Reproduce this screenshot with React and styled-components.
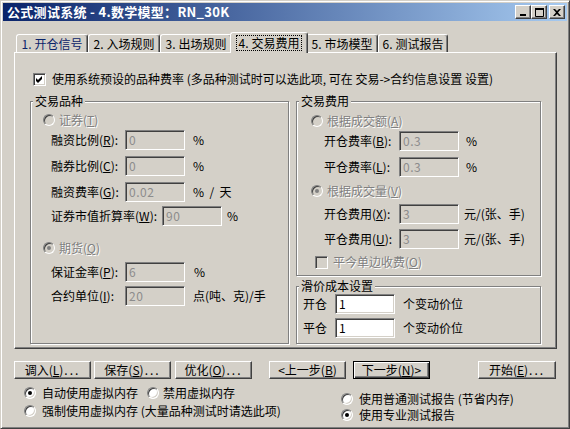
import React from 'react'
import styled, { createGlobalStyle, css } from 'styled-components'

const face = '#D4D0C8'
const shadow = '#808080'
const dark = '#404040'

const Global = createGlobalStyle`
	html, body { margin: 0; padding: 0; background: ${ face }; }
	body {
		font-family: "Noto Sans CJK SC", "Liberation Sans", sans-serif;
		font-size: 12px;
		line-height: 14px;
		color: #000;
	}
	* { box-sizing: border-box; }
`

const raised = css`
	border: 1px solid;
	border-color: #fff ${ dark } ${ dark } #fff;
	box-shadow: inset -1px -1px 0 ${ shadow };
`
const sunken = css`
	border: 1px solid;
	border-color: ${ shadow } #fff #fff ${ shadow };
	box-shadow: inset 1px 1px 0 ${ dark }, inset -1px -1px 0 ${ face };
`
const grayText = css`
	color: ${ shadow };
	text-shadow: 1px 1px 0 #fff;
`

const Window = styled.div`
	width: 570px;
	height: 429px;
	background: ${ face };
	border: 1px solid;
	border-color: ${ face } ${ dark } ${ dark } ${ face };
	box-shadow: inset 1px 1px 0 #fff, inset -1px -1px 0 ${ shadow };
	padding: 2px;
	display: flex;
	flex-direction: column;
	overflow: hidden;
`
const TitleBar = styled.div`
	height: 18px;
	display: flex;
	align-items: center;
	padding: 0 2px;
	background: linear-gradient(90deg, #0A246A, #A6CAF0);
	color: #fff;
	font-weight: bold;
	font-size: 13px;
`
const Caption = styled.div`
	flex: 1;
	white-space: nowrap;
	padding-left: 2px;
	letter-spacing: 0.3px;
`
const CapButton = styled.div`
	${ raised }
	width: 16px;
	height: 14px;
	margin-left: ${ p => p.$ml || 0 }px;
	background: ${ face };
	display: flex;
	align-items: center;
	justify-content: center;
`

const TabStrip = styled.div`
	display: flex;
	align-items: flex-end;
	height: 20px;
	margin: 11px 10px 0 11px;
	padding-left: 2px;
`
const Tab = styled.div`
	position: relative;
	flex: none;
	width: ${ p => p.$w }px;
	height: 18px;
	display: flex;
	align-items: center;
	justify-content: center;
	background: ${ face };
	border: 1px solid;
	border-bottom: none;
	border-color: #fff ${ dark } transparent #fff;
	border-radius: 3px 3px 0 0;
	box-shadow: inset -1px 0 0 ${ shadow };
	color: ${ p => p.$hot ? '#0A246A' : '#000' };
	white-space: nowrap;
	${ p => p.$active && css`
		width: ${ p.$w + 4 }px;
		height: 21px;
		margin: 0 -2px -1px;
		z-index: 1;
	` }
`
const Num = styled.span`
	margin-right: 3px;
`
const Focus = styled.span`
	outline: 1px dotted #000;
	outline-offset: 0;
	padding: 0 1px;
`
const Panel = styled.div`
	${ raised }
	margin: 0 10px 0 11px;
	height: 297px;
	padding: 19px 15px 0 15px;
`
const Row = styled.div`
	display: flex;
	align-items: center;
	height: ${ p => p.$h || 20 }px;
	margin: ${ p => p.$mt || 0 }px 0 0 ${ p => p.$ml || 0 }px;
	white-space: nowrap;
`
const Columns = styled.div`
	display: flex;
	gap: 7px;
	margin-top: 8px;
`
const Stack = styled.div`
	display: flex;
	flex-direction: column;
	width: ${ p => p.$w }px;
`
const Group = styled.fieldset`
	margin: ${ p => p.$mt || 0 }px 0 0;
	padding: 0;
	min-width: 0;
	width: ${ p => p.$w ? `${ p.$w }px` : 'auto' };
	height: ${ p => p.$h }px;
	border: 1px solid ${ shadow };
	box-shadow: inset 1px 1px 0 #fff, 1px 1px 0 #fff;
`
const Legend = styled.legend`
	margin-left: 2px;
	padding: 0 2px;
	background: ${ face };
	line-height: 14px;
`
const Label = styled.span`
	flex: none;
	width: ${ p => p.$w }px;
`
const Field = styled.div`
	${ sunken }
	flex: none;
	width: ${ p => p.$w || 60 }px;
	height: 20px;
	padding: 0 3px;
	display: flex;
	align-items: center;
	letter-spacing: 0.5px;
	background: ${ p => p.$disabled ? face : '#fff' };
	color: ${ p => p.$disabled ? '#8c8c8c' : '#000' };
`
const Unit = styled.span`
	margin-left: ${ p => p.$ml }px;
`
const Text = styled.span`
	margin-left: ${ p => p.$ml || 5 }px;
	${ p => p.$disabled && grayText }
`
const RadioDot = styled.span`
	${ sunken }
	flex: none;
	width: 12px;
	height: 12px;
	border-radius: 50%;
	margin-left: ${ p => p.$ml || 0 }px;
	background: ${ p => p.$disabled ? face : '#fff' };
	display: flex;
	align-items: center;
	justify-content: center;
	&::after {
		content: '';
		display: ${ p => p.$checked ? 'block' : 'none' };
		width: 4px;
		height: 4px;
		border-radius: 50%;
		background: ${ p => p.$disabled ? shadow : '#000' };
	}
`
const Box = styled.span`
	${ sunken }
	flex: none;
	width: 13px;
	height: 13px;
	background: ${ p => p.$disabled ? face : '#fff' };
	display: flex;
	align-items: center;
	justify-content: center;
`
const ButtonRow = styled.div`
	display: flex;
	margin: 12px 0 0 11px;
`
const Button = styled.div`
	${ raised }
	flex: none;
	width: ${ p => p.$w || 77 }px;
	height: 18px;
	margin-left: ${ p => p.$ml || 0 }px;
	display: flex;
	align-items: center;
	justify-content: center;
	white-space: nowrap;
	${ p => p.$default && css`
		border: 1px solid #000;
		box-shadow: inset 1px 1px 0 #fff, inset -1px -1px 0 ${ dark }, inset -2px -2px 0 ${ shadow };
	` }
`
const Dots = styled.span`
	letter-spacing: 2px;
	margin-left: 1px;
`
const Options = styled.div`
	display: flex;
	margin: 7px 0 0 21px;
`
const OptCol = styled.div`
	display: flex;
	flex-direction: column;
	gap: ${ p => p.$gap }px;
	width: ${ p => p.$w ? `${ p.$w }px` : 'auto' };
	padding-top: ${ p => p.$pt || 0 }px;
	flex: none;
`

const Check = () => (
	<svg width="7" height="7" viewBox="0 0 7 7">
		<polygon points="0,2 2,4 6,0 6,3 2,7 0,5" fill="#000" />
	</svg>
)

const Radio = ({ checked, disabled, children, ml, mt, gap }) => (
	<Row $h={ 14 } $ml={ ml } $mt={ mt }>
		<RadioDot $checked={ checked } $disabled={ disabled } />
		<Text $ml={ gap || 6 } $disabled={ disabled }>{ children }</Text>
	</Row>
)

const Mn = ({ k }) => <>(<u>{ k }</u>)</>

const leftRows = [
	{ mt: 3, label: '融资比例', k: 'R', value: '0', unit: '%' },
	{ mt: 6, label: '融券比例', k: 'C', value: '0', unit: '%' },
	{ mt: 6, label: '融资费率', k: 'G', value: '0.02', unit: '%  /  天' },
	{ mt: 4, label: '证券市值折算率', k: 'W', value: '90', unit: '%', w: 111, uml: 5 },
]
const futureRows = [
	{ mt: 7, label: '保证金率', k: 'P', value: '6', unit: '%', uml: 9 },
	{ mt: 4, label: '合约单位', k: 'I', value: '20', unit: '点(吨、克)/手' },
]
const rateRows = [
	{ mt: 3, label: '开仓费率', k: 'B', value: '0.3', unit: '%', uml: 7 },
	{ mt: 6, label: '平仓费率', k: 'L', value: '0.3', unit: '%', uml: 7 },
]
const volRows = [
	{ mt: 6, label: '开仓费用', k: 'X', value: '3', unit: '元/(张、手)', uml: 5 },
	{ mt: 5, label: '平仓费用', k: 'U', value: '3', unit: '元/(张、手)', uml: 5 },
]

const FieldRow = ({ r, ml, w }) => (
	<Row $mt={ r.mt } $ml={ ml }>
		<Label $w={ r.w || w }>{ r.label }<Mn k={ r.k } />:</Label>
		<Field $disabled>{ r.value }</Field>
		<Unit $ml={ r.uml || 8 } style={ { whiteSpace: 'pre' } }>{ r.unit }</Unit>
	</Row>
)

const tabs = [
	{ n: '1.', t: '开仓信号', w: 72, hot: true },
	{ n: '2.', t: '入场规则', w: 72 },
	{ n: '3.', t: '出场规则', w: 72 },
	{ n: '4.', t: '交易费用', w: 74, active: true },
	{ n: '5.', t: '市场模型', w: 72 },
	{ n: '6.', t: '测试报告', w: 70 },
]

const App = () => (
	<>
		<Global />
		<Window>
			<TitleBar>
				<Caption>公式测试系统 - 4.数学模型：RN_30K</Caption>
				<CapButton>
					<svg width="8" height="7" viewBox="0 0 8 7"><rect x="1" y="5" width="6" height="2" fill="#000" /></svg>
				</CapButton>
				<CapButton>
					<svg width="9" height="9" viewBox="0 0 9 9"><path d="M0.5 0.5h8v8h-8z" fill="none" stroke="#000" /><rect x="0" y="0" width="9" height="2" fill="#000" /></svg>
				</CapButton>
				<CapButton $ml={ 2 }>
					<svg width="8" height="7" viewBox="0 0 8 7">
						<path d="M0 0h2l2 2 2-2h2L5 3.5 8 7H6L4 5 2 7H0l3-3.5z" fill="#000" />
					</svg>
				</CapButton>
			</TitleBar>

			<TabStrip>
				{ tabs.map(tab => (
					<Tab key={ tab.n } $w={ tab.w } $hot={ tab.hot } $active={ tab.active }>
						{ tab.active
							? <Focus><Num>{ tab.n }</Num>{ tab.t }</Focus>
							: <><Num>{ tab.n }</Num>{ tab.t }</> }
					</Tab>
				)) }
			</TabStrip>

			<Panel>
				<Row $h={ 14 } $ml={ 3 }>
					<Box><Check /></Box>
					<Text $ml={ 6 }>使用系统预设的品种费率 (多品种测试时可以选此项, 可在 交易-&gt;合约信息设置 设置)</Text>
				</Row>

				<Columns>
					<Group $w={ 259 } $h={ 250 }>
						<Legend>交易品种</Legend>
						<Radio disabled ml={ 12 } mt={ 5 } gap={ 4 }>证券<Mn k="T" /></Radio>
						{ leftRows.map(r => <FieldRow key={ r.k } r={ r } ml={ 20 } w={ 74 } />) }
						<Radio checked disabled ml={ 12 } mt={ 15 } gap={ 4 }>期货<Mn k="Q" /></Radio>
						{ futureRows.map(r => <FieldRow key={ r.k } r={ r } ml={ 20 } w={ 74 } />) }
					</Group>

					<Stack $w={ 245 }>
						<Group $h={ 182 }>
							<Legend>交易费用</Legend>
							<Radio disabled ml={ 14 } mt={ 6 } gap={ 4 }>根据成交额<Mn k="A" /></Radio>
							{ rateRows.map(r => <FieldRow key={ r.k } r={ r } ml={ 27 } w={ 75 } />) }
							<Radio checked disabled ml={ 14 } mt={ 7 } gap={ 4 }>根据成交量<Mn k="V" /></Radio>
							{ volRows.map(r => <FieldRow key={ r.k } r={ r } ml={ 27 } w={ 75 } />) }
							<Row $h={ 14 } $mt={ 6 } $ml={ 18 }>
								<Box $disabled />
								<Text $disabled>平今单边收费<Mn k="O" /></Text>
							</Row>
						</Group>
						<Group $mt={ 3 } $h={ 65 }>
							<Legend>滑价成本设置</Legend>
							<Row $mt={ 1 } $ml={ 6 }>
								<Label $w={ 32 }>开仓</Label>
								<Field>1</Field>
								<Unit $ml={ 8 }>个变动价位</Unit>
							</Row>
							<Row $mt={ 4 } $ml={ 6 }>
								<Label $w={ 32 }>平仓</Label>
								<Field>1</Field>
								<Unit $ml={ 8 }>个变动价位</Unit>
							</Row>
						</Group>
					</Stack>
				</Columns>
			</Panel>

			<ButtonRow>
				<Button>调入<Mn k="L" /><Dots>...</Dots></Button>
				<Button $ml={ 3 }>保存<Mn k="S" /><Dots>...</Dots></Button>
				<Button $ml={ 4 }>优化<Mn k="O" /><Dots>...</Dots></Button>
				<Button $ml={ 17 }>&lt;上一步<Mn k="B" /></Button>
				<Button $ml={ 7 } $default>下一步<Mn k="N" />&gt;</Button>
				<Button $ml={ 48 } $w={ 78 }>开始<Mn k="E" /><Dots>...</Dots></Button>
			</ButtonRow>

			<Options>
				<OptCol $w={ 317 } $gap={ 4 }>
					<Row $h={ 14 }>
						<RadioDot $checked />
						<Text $ml={ 6 }>自动使用虚拟内存</Text>
						<RadioDot $ml={ 9 } />
						<Text $ml={ 4 }>禁用虚拟内存</Text>
					</Row>
					<Radio>强制使用虚拟内存 (大量品种测试时请选此项)</Radio>
				</OptCol>
				<OptCol $pt={ 6 } $gap={ 2 }>
					<Radio>使用普通测试报告 (节省内存)</Radio>
					<Radio checked>使用专业测试报告</Radio>
				</OptCol>
			</Options>
		</Window>
	</>
)

export default App
